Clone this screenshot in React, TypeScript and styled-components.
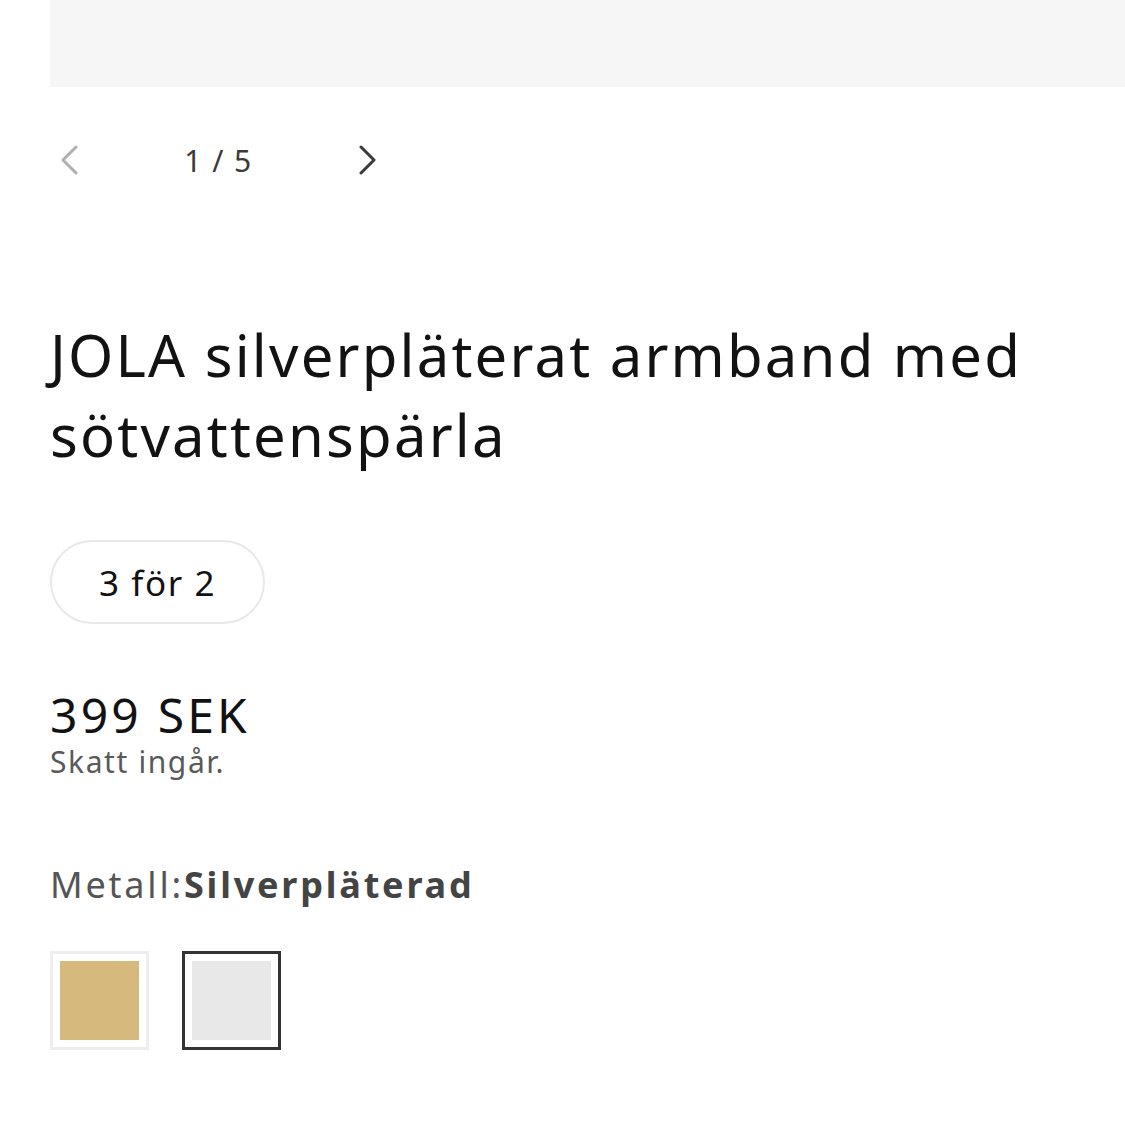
import styled, { createGlobalStyle } from "styled-components";

const Global = createGlobalStyle`
  body {
    margin: 0;
    background: #fff;
    font-family: "Noto Sans", "Open Sans", sans-serif;
    color: #121212;
  }
`;

const Page = styled.div`
  padding: 0 0 60px 50px;
`;

const Media = styled.div`
  height: 87px;
  background: #f6f6f6;
`;

const SliderNav = styled.div`
  display: flex;
  align-items: center;
  height: 146px;
`;

const NavButton = styled.button<{ $disabled?: boolean }>`
  width: 38px;
  height: 60px;
  display: flex;
  align-items: center;
  justify-content: center;
  background: none;
  border: 0;
  padding: 0;
  color: ${(p) => (p.$disabled ? "#b0b0b0" : "#3a3a3a")};
`;

const Counter = styled.span`
  width: 261px;
  text-align: center;
  font-size: 30px;
  letter-spacing: 1.5px;
  color: #3a3a3a;
`;

const Info = styled.div`
  padding-right: 50px;
`;

const Title = styled.h1`
  margin: 82px 0 0;
  font-size: 58px;
  font-weight: 400;
  line-height: 80px;
  letter-spacing: 2.2px;
  color: #121212;
`;

const Badge = styled.span`
  display: inline-flex;
  align-items: center;
  margin-top: 65px;
  height: 84px;
  padding: 0 47px;
  box-sizing: border-box;
  border: 2px solid #e8e8e8;
  border-radius: 42px;
  font-size: 35px;
  letter-spacing: 1.6px;
`;

const Price = styled.div`
  margin-top: 64px;
  font-size: 48px;
  line-height: 54px;
  letter-spacing: 3.2px;
`;

const Tax = styled.div`
  font-size: 30px;
  line-height: 40px;
  letter-spacing: 1.6px;
  color: #5a5a5a;
`;

const OptionLabel = styled.div`
  margin-top: 78px;
  font-size: 36px;
  letter-spacing: 2.8px;
  color: #555;
  b {
    font-weight: 700;
    color: #444;
  }
`;

const Swatches = styled.div`
  display: flex;
  gap: 33px;
  margin-top: 42px;
`;

const Swatch = styled.div<{ $color: string; $active?: boolean }>`
  width: 99px;
  height: 99px;
  box-sizing: border-box;
  border: 3px solid ${(p) => (p.$active ? "#333" : "#eeeeee")};
  padding: 7px;
  span {
    display: block;
    width: 100%;
    height: 100%;
    background: ${(p) => p.$color};
  }
`;

const Chevron = ({ dir }: { dir: "left" | "right" }) => (
  <svg width="20" height="30" viewBox="0 0 20 30" fill="none">
    <path
      d={dir === "left" ? "M17 2 L4 15 L17 28" : "M3 2 L16 15 L3 28"}
      stroke="currentColor"
      strokeWidth="3"
      strokeLinecap="round"
      strokeLinejoin="round"
    />
  </svg>
);

export default function App() {
  return (
    <Page>
      <Global />
      <Media />
      <SliderNav>
        <NavButton $disabled aria-label="Föregående">
          <Chevron dir="left" />
        </NavButton>
        <Counter>1 / 5</Counter>
        <NavButton aria-label="Nästa">
          <Chevron dir="right" />
        </NavButton>
      </SliderNav>
      <Info>
        <Title>JOLA silverpläterat armband med sötvattenspärla</Title>
        <Badge>3 för 2</Badge>
        <Price>399 SEK</Price>
        <Tax>Skatt ingår.</Tax>
        <OptionLabel>
          Metall:<b>Silverpläterad</b>
        </OptionLabel>
        <Swatches>
          <Swatch $color="#d6b97c">
            <span />
          </Swatch>
          <Swatch $color="#e8e8e8" $active>
            <span />
          </Swatch>
        </Swatches>
      </Info>
    </Page>
  );
}
